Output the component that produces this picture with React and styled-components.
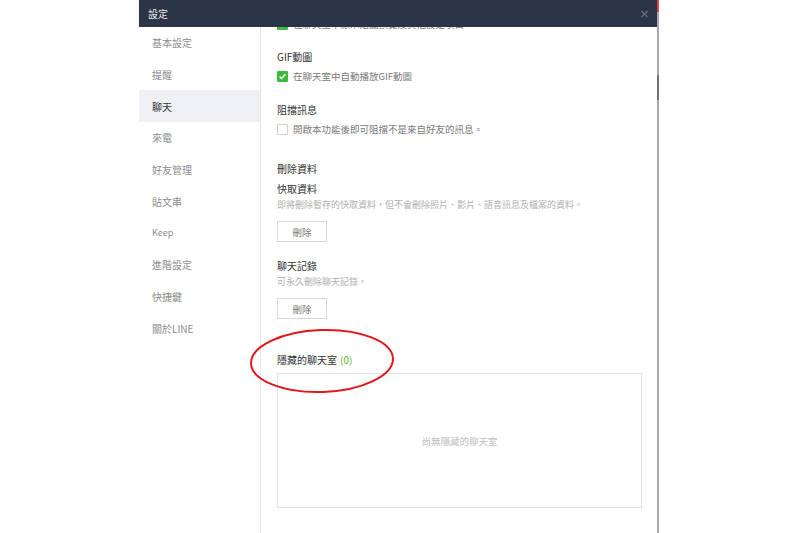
import React from "react";
import styled, { createGlobalStyle } from "styled-components";

const Global = createGlobalStyle`
  html, body { margin: 0; padding: 0; background: #fff; overflow: hidden; }
  * { box-sizing: border-box; }
  body { font-family: "Noto Sans CJK TC", "Noto Sans", sans-serif; }
`;

const Page = styled.div`
  position: relative;
  width: 800px;
  height: 533px;
  display: flex;
  background: #fff;
`;

const Gutter = styled.div`
  width: 139px;
  flex-shrink: 0;
`;

const Dialog = styled.div`
  width: 518px;
  height: 533px;
  display: flex;
  flex-direction: column;
  background: #fff;
`;

const Edge = styled.div`
  width: 2px;
  height: 533px;
  background: linear-gradient(
    to bottom,
    #d44 0px, #d44 12px,
    #a9a9ad 12px, #a9a9ad 75px,
    #6f7077 75px, #6f7077 100px,
    #a9a9ad 100px
  );
`;

const Header = styled.div`
  height: 27px;
  flex-shrink: 0;
  background: #2c3447;
  display: flex;
  align-items: center;
  justify-content: space-between;
  padding: 0 7px 0 9px;
`;

const Title = styled.span`
  color: #e9ebef;
  font-size: 10px;
`;

const Close = styled.span`
  color: #6d7486;
  font-size: 13px;
  font-family: "DejaVu Sans", sans-serif;
  line-height: 1;
`;

const Body = styled.div`
  flex: 1;
  display: flex;
  overflow: hidden;
`;

const Sidebar = styled.div`
  width: 122px;
  flex-shrink: 0;
  border-right: 1px solid #e5e5ef;
  display: flex;
  flex-direction: column;
`;

const NavItem = styled.div`
  height: 31.7px;
  display: flex;
  align-items: center;
  padding-left: 13px;
  font-size: ${(p) => (p.$latin ? "9px" : "10px")};
  color: ${(p) => (p.$active ? "#333" : "#8c8c8c")};
  background: ${(p) => (p.$active ? "#eef0f4" : "transparent")};
`;

const Content = styled.div`
  flex: 1;
  overflow: hidden;
  padding: 0 16px 0 16px;
`;

const Inner = styled.div`
  margin-top: -11px;
  display: flex;
  flex-direction: column;
`;

const SectionTitle = styled.div`
  font-size: 10px;
  line-height: 16px;
  color: #333;
  margin-top: ${(p) => p.$mt || 0}px;
`;

const Count = styled.span`
  color: #5dbb2f;
  margin-left: 3px;
`;

const CheckRow = styled.div`
  display: flex;
  align-items: center;
  height: 16px;
  gap: 5px;
  font-size: 9.5px;
  color: #7a7a7a;
  margin-top: ${(p) => p.$mt || 0}px;
`;

const Box = styled.span`
  width: 11px;
  height: 11px;
  border-radius: 1px;
  flex-shrink: 0;
  display: flex;
  align-items: center;
  justify-content: center;
  background: ${(p) => (p.$on ? "#3bbb3b" : "#fff")};
  border: 1px solid ${(p) => (p.$on ? "#3bbb3b" : "#cfcfcf")};
`;

const Desc = styled.div`
  font-size: 9px;
  line-height: 14px;
  color: #b0b0b0;
  margin-top: 1px;
`;

const Button = styled.div`
  width: 50px;
  height: 21px;
  margin-top: 9px;
  border: 1px solid #d8d8dc;
  display: flex;
  align-items: center;
  justify-content: center;
  font-size: 9.5px;
  color: #7a7a7a;
`;

const Empty = styled.div`
  width: 365px;
  height: 135px;
  margin-top: 5px;
  border: 1px solid #e3e3e3;
  display: flex;
  align-items: center;
  justify-content: center;
  font-size: 9.5px;
  color: #c0c0c0;
`;

const Annotation = styled.svg`
  position: absolute;
  left: 246px;
  top: 326px;
  pointer-events: none;
`;

const Check = () => (
  <svg width="9" height="9" viewBox="0 0 9 9">
    <path d="M1.6 4.6 L3.6 6.5 L7.4 2.3" fill="none" stroke="#fff" strokeWidth="1.5" />
  </svg>
);

const nav = ["基本設定", "提醒", "聊天", "來電", "好友管理", "貼文串", "Keep", "進階設定", "快捷鍵", "關於LINE"];

export default function App() {
  return (
    <>
      <Global />
      <Page>
        <Gutter />
        <Dialog>
          <Header>
            <Title>設定</Title>
            <Close>×</Close>
          </Header>
          <Body>
            <Sidebar>
              {nav.map((n) => (
                <NavItem key={n} $active={n === "聊天"} $latin={n === "Keep"}>
                  {n}
                </NavItem>
              ))}
            </Sidebar>
            <Content>
              <Inner>
                <CheckRow>
                  <Box $on><Check /></Box>
                  在聊天室中顯示貼圖預覽及其他設定項目
                </CheckRow>
                <SectionTitle $mt={17}>GIF動圖</SectionTitle>
                <CheckRow $mt={3}>
                  <Box $on><Check /></Box>
                  在聊天室中自動播放GIF動圖
                </CheckRow>
                <SectionTitle $mt={18}>阻擋訊息</SectionTitle>
                <CheckRow $mt={3}>
                  <Box />
                  開啟本功能後即可阻擋不是來自好友的訊息。
                </CheckRow>
                <SectionTitle $mt={24}>刪除資料</SectionTitle>
                <SectionTitle $mt={4}>快取資料</SectionTitle>
                <Desc>即將刪除暫存的快取資料，但不會刪除照片、影片、語音訊息及檔案的資料。</Desc>
                <Button>刪除</Button>
                <SectionTitle $mt={16}>聊天記錄</SectionTitle>
                <Desc>可永久刪除聊天記錄。</Desc>
                <Button>刪除</Button>
                <SectionTitle $mt={33}>
                  隱藏的聊天室<Count>(0)</Count>
                </SectionTitle>
                <Empty>尚無隱藏的聊天室</Empty>
              </Inner>
            </Content>
          </Body>
        </Dialog>
        <Edge />
        <Annotation width="152" height="72" viewBox="0 0 152 72">
          <ellipse cx="76" cy="35" rx="71" ry="31" fill="none" stroke="#e0161b" strokeWidth="2" transform="rotate(-2 76 35)" />
        </Annotation>
      </Page>
    </>
  );
}
